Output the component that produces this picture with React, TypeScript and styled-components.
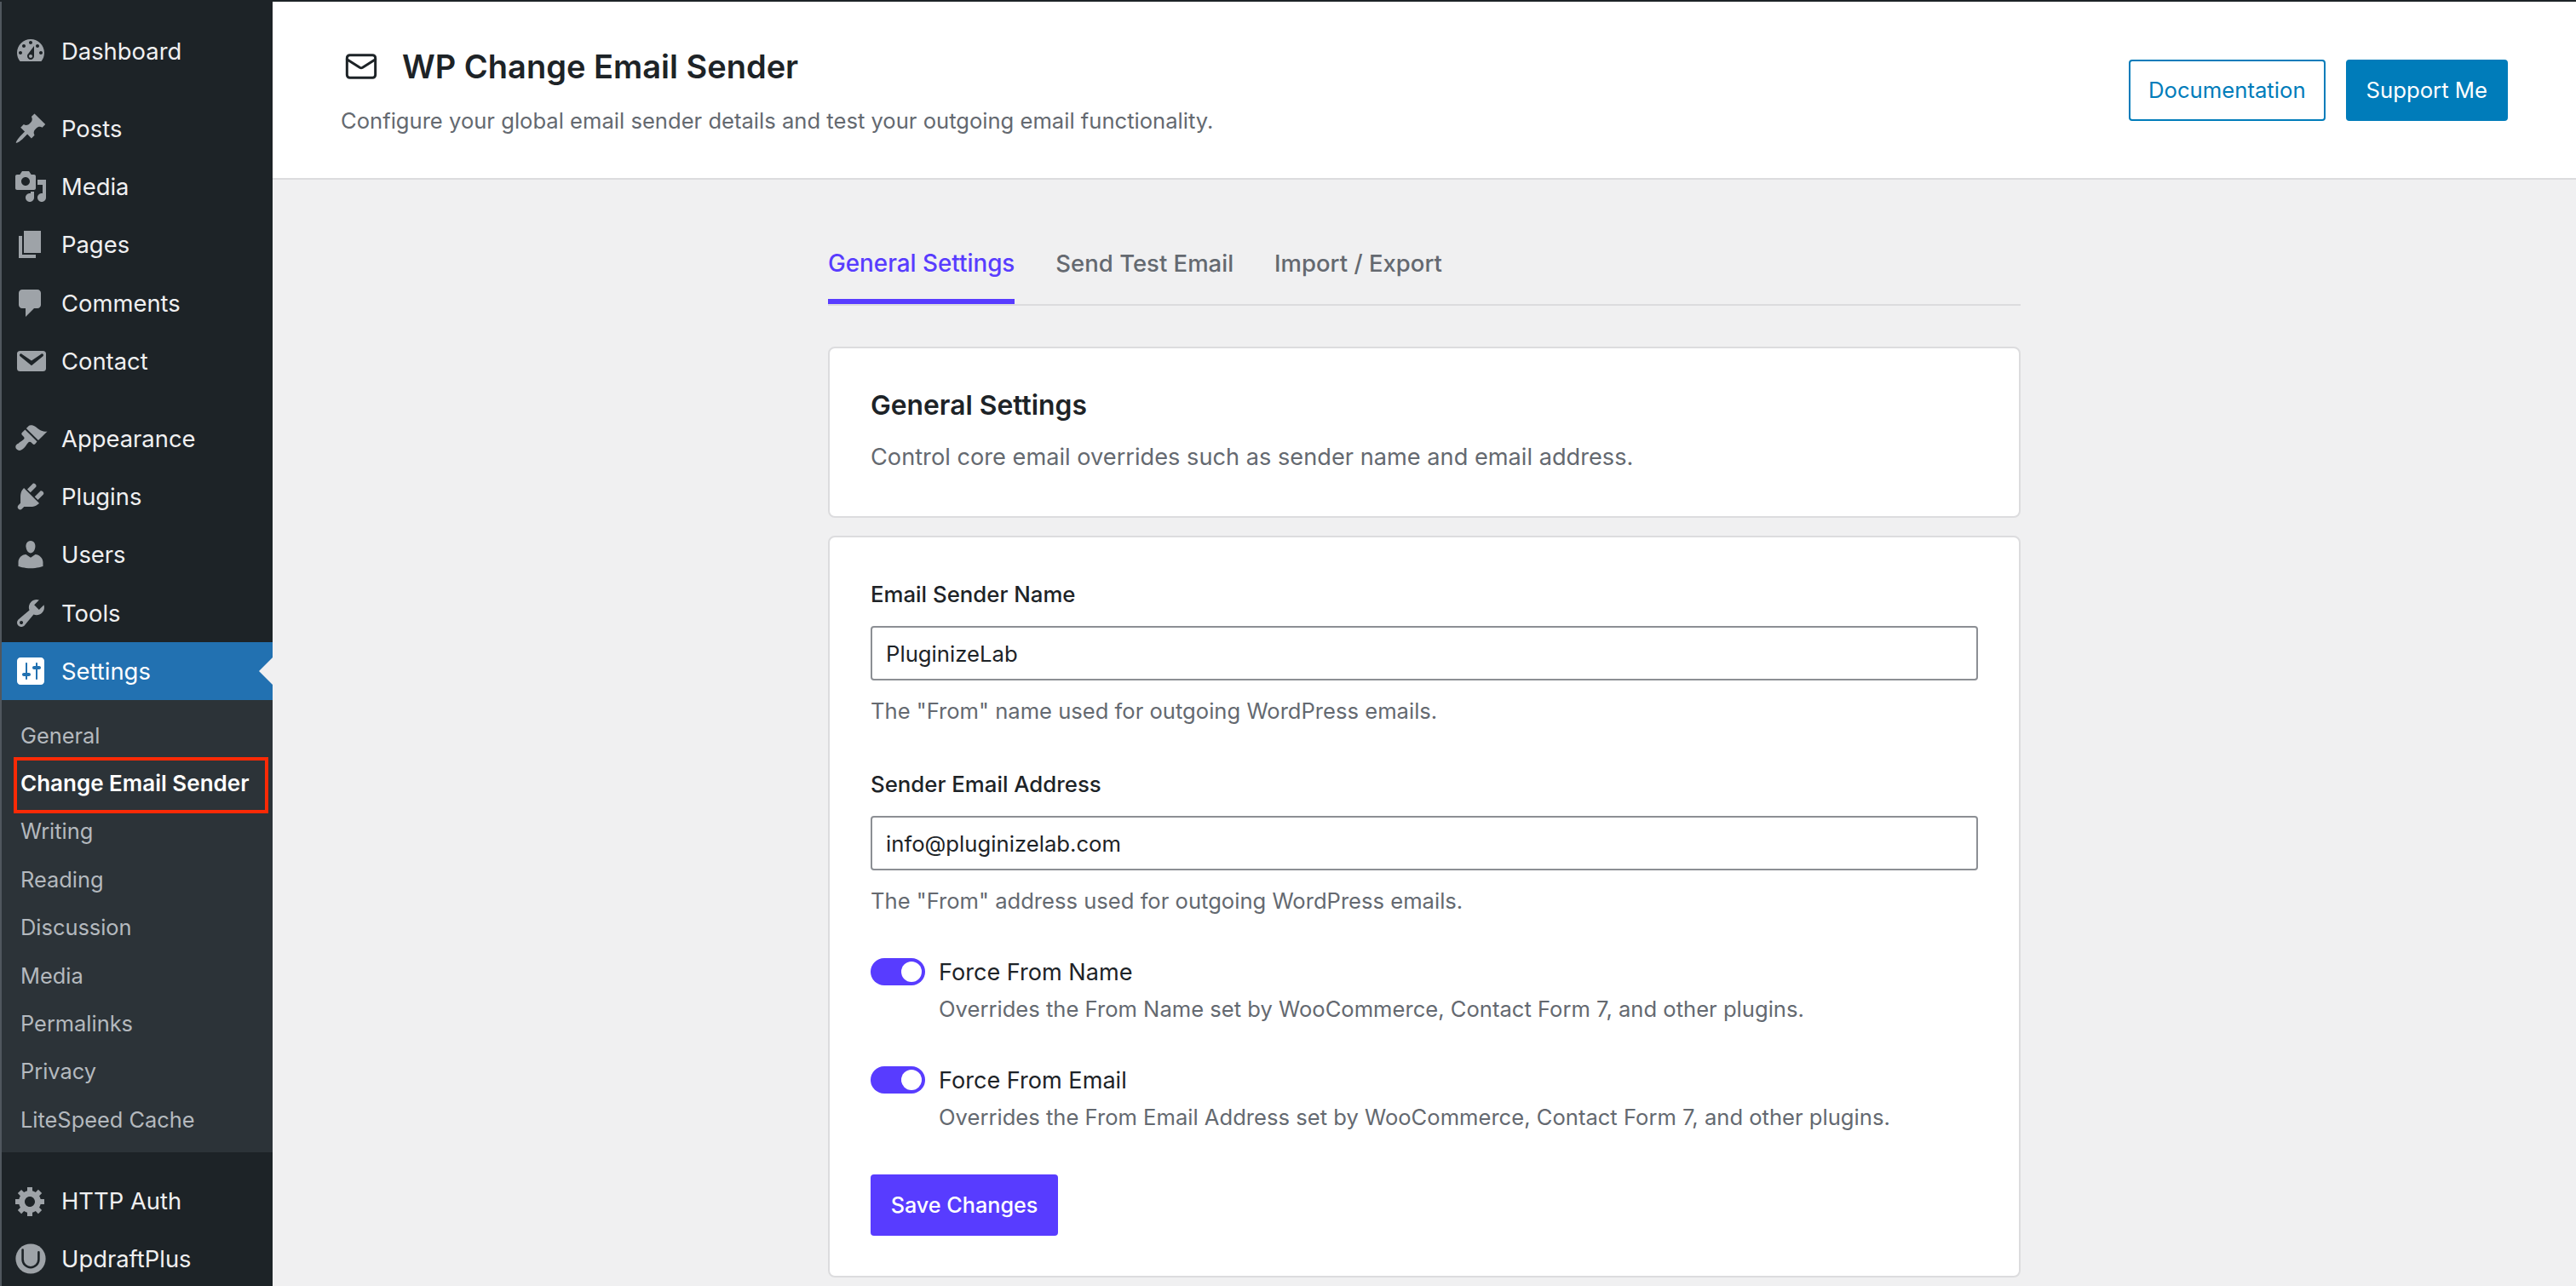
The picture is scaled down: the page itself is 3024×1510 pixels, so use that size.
import React from 'react';
import styled, { createGlobalStyle } from 'styled-components';
import { Mail } from 'lucide-react';

const Global = createGlobalStyle`
  html, body { margin: 0; padding: 0; background: #f0f0f1; }
  * { box-sizing: border-box; }
  #root { width: 3024px; height: 1510px; overflow: hidden; font-family: Inter, "Liberation Sans", sans-serif; }
`;

const Shell = styled.div`
  display: flex;
  width: 3024px;
  height: 1510px;
  overflow: hidden;
  border-top: 2px solid #1d2327;
`;

const Sidebar = styled.nav`
  flex: 0 0 320px;
  height: 1510px;
  background: #1d2327;
  border-left: 2px solid #50575e;
  padding-top: 24px;
  overflow: hidden;
`;

const Group = styled.div`
  margin-bottom: 22px;
`;

const MenuRow = styled.a<{ $active?: boolean }>`
  position: relative;
  display: flex;
  align-items: center;
  height: ${p => (p.$active ? '68px' : '68.4px')};
  margin-left: -2px;
  padding-left: 16px;
  background: ${p => (p.$active ? '#2271b1' : 'transparent')};
  color: ${p => (p.$active ? '#fff' : '#f0f0f1')};
  font-size: 27.4px;
  ${p =>
    p.$active &&
    `&::after {
      content: '';
      position: absolute;
      right: 0;
      top: 18px;
      border: 16px solid transparent;
      border-right-color: #f0f0f1;
      border-left-width: 0;
    }`}
`;

const MenuIcon = styled.svg<{ $active?: boolean }>`
  flex: 0 0 40px;
  width: 40px;
  height: 40px;
  margin-right: 16px;
  fill: ${p => (p.$active ? '#fff' : '#9ea3a8')};
`;

const Submenu = styled.div`
  background: #2c3338;
  padding: 13px 0 11px;
  margin-bottom: 22px;
`;

const SubRow = styled.a<{ $current?: boolean }>`
  position: relative;
  display: flex;
  align-items: center;
  height: 56.4px;
  padding-left: 22px;
  font-size: ${p => (p.$current ? '26px' : '25.4px')};
  color: ${p => (p.$current ? '#fff' : '#b4b9be')};
  font-weight: ${p => (p.$current ? 600 : 400)};
`;

const Marker = styled.span`
  position: absolute;
  left: 14px;
  top: -2px;
  width: 299px;
  height: 66px;
  border: 4px solid #fb2a06;
  pointer-events: none;
`;

const Main = styled.main`
  flex: 1;
  min-width: 0;
  background: #f0f0f1;
`;

const Header = styled.header`
  display: flex;
  align-items: center;
  justify-content: space-between;
  height: 209px;
  padding: 0 80px;
  background: #fff;
  border-bottom: 2px solid #dcdcde;
`;

const HeaderIntro = styled.div`
  padding-top: 3px;
`;

const TitleRow = styled.div`
  display: flex;
  align-items: center;
  padding-left: 4px;
  gap: 28px;
  color: #1d2327;
`;

const Title = styled.h1`
  margin: 0;
  font-size: 38px;
  line-height: 48px;
  font-weight: 600;
  color: #1d2327;
`;

const Subtitle = styled.p`
  margin: 21px 0 0;
  font-size: 25.6px;
  line-height: 38px;
  color: #646970;
`;

const Actions = styled.div`
  display: flex;
  gap: 24px;
`;

const HeaderButton = styled.a<{ $primary?: boolean }>`
  display: flex;
  align-items: center;
  justify-content: center;
  height: 72px;
  padding: 0 ${p => (p.$primary ? '22px' : '21px')};
  border: 2px solid #007cba;
  border-radius: 4px;
  font-size: 25.7px;
  background: ${p => (p.$primary ? '#007cba' : '#fff')};
  color: ${p => (p.$primary ? '#fff' : '#007cba')};
`;

const Column = styled.div`
  width: 1400px;
  margin: 78px auto 0;
`;

const Tabs = styled.div`
  display: flex;
  gap: 48px;
  border-bottom: 2px solid #dcdcde;
`;

const Tab = styled.a<{ $active?: boolean }>`
  padding-bottom: 22px;
  border-bottom: 6px solid ${p => (p.$active ? '#583cff' : 'transparent')};
  font-size: ${p => (p.$active ? '27.8px' : '27.5px')};
  line-height: 40px;
  font-weight: 500;
  color: ${p => (p.$active ? '#583cff' : '#646970')};
`;

const Card = styled.section`
  background: #fff;
  border: 2px solid #dcdcde;
  border-radius: 8px;
`;

const IntroCard = styled(Card)`
  margin-top: 48px;
  padding: 48px 48px 49px;
`;

const FormCard = styled(Card)`
  margin-top: 21px;
  padding: 48px 48px 47px;
`;

const CardTitle = styled.h2`
  margin: 0;
  font-size: 31.8px;
  line-height: 38px;
  font-weight: 600;
  color: #1d2327;
`;

const CardText = styled.p`
  margin: 22px 0 0;
  font-size: 27.2px;
  line-height: 40px;
  color: #646970;
`;

const Field = styled.div`
  margin-bottom: 50px;
`;

const Label = styled.label`
  display: block;
  padding-top: 2px;
  font-size: 25.8px;
  line-height: 34px;
  font-weight: 500;
  color: #1d2327;
`;

const TextInput = styled.input`
  display: block;
  width: 100%;
  height: 64px;
  margin-top: 20px;
  padding: 0 16px;
  border: 2px solid #8c8f94;
  border-radius: 4px;
  background: #fff;
  font-family: inherit;
  font-size: 25.7px;
  color: #1d2327;
`;

const Help = styled.p`
  margin: 19px 0 0;
  font-size: 25.6px;
  line-height: 34px;
  color: #646970;
`;

const ToggleRow = styled.div`
  display: flex;
  gap: 16px;
  margin-bottom: 50px;
`;

const Track = styled.span`
  display: flex;
  justify-content: flex-end;
  align-items: center;
  flex: 0 0 64px;
  height: 32px;
  padding-right: 4px;
  border-radius: 16px;
  background: #583cff;
`;

const Knob = styled.span`
  width: 24px;
  height: 24px;
  border-radius: 50%;
  background: #fff;
`;

const ToggleName = styled.div`
  font-size: 27.1px;
  line-height: 34px;
  color: #1d2327;
`;

const ToggleHelp = styled.div`
  margin-top: 9px;
  font-size: 25.6px;
  line-height: 34px;
  color: #646970;
`;

const SaveButton = styled.button`
  display: block;
  height: 72px;
  width: 220px;
  border: 0;
  border-radius: 4px;
  background: #583cff;
  color: #fff;
  font-family: inherit;
  font-size: 25.2px;
  font-weight: 500;
`;

const P = {
  dash: 'M3.76 16h12.48c1.1-1.37 1.76-3.11 1.76-5 0-4.42-3.58-8-8-8s-8 3.58-8 8c0 1.89.66 3.63 1.76 5zM10 4c.55 0 1 .45 1 1s-.45 1-1 1-1-.45-1-1 .45-1 1-1zM6 6c.55 0 1 .45 1 1s-.45 1-1 1-1-.45-1-1 .45-1 1-1zm8 0c.55 0 1 .45 1 1s-.45 1-1 1-1-.45-1-1 .45-1 1-1zm-5.37 5.55L12 7v6c0 1.1-.9 2-2 2s-2-.9-2-2c0-.57.24-1.08.63-1.45zM4 10c.55 0 1 .45 1 1s-.45 1-1 1-1-.45-1-1 .45-1 1-1zm12 0c.55 0 1 .45 1 1s-.45 1-1 1-1-.45-1-1 .45-1 1-1zm-5 3c0-.55-.45-1-1-1s-1 .45-1 1 .45 1 1 1 1-.45 1-1z',
  post: 'M10.44 3.02l1.82-1.82 6.36 6.35-1.83 1.82c-1.05-.68-2.48-.57-3.41.36l-.75.75c-.92.93-1.04 2.35-.35 3.41l-1.83 1.82-2.41-2.41-2.8 2.79c-.42.42-3.38 2.71-3.8 2.29s1.86-3.39 2.28-3.81l2.79-2.79L4.1 9.36l1.83-1.82c1.05.69 2.48.57 3.4-.36l.75-.75c.93-.92 1.05-2.35.36-3.41z',
  media: 'M13 11V4c0-.55-.45-1-1-1h-1.67L9 1H5L3.67 3H2c-.55 0-1 .45-1 1v7c0 .55.45 1 1 1h10c.55 0 1-.45 1-1zM7 4.5c1.38 0 2.5 1.12 2.5 2.5S8.38 9.5 7 9.5 4.5 8.38 4.5 7 5.62 4.5 7 4.5zM14 6h5v10.5c0 1.38-1.12 2.5-2.5 2.5S14 17.88 14 16.5s1.12-2.5 2.5-2.5c.17 0 .34.02.5.05V9h-3V6zm-4 8.05V13h2v3.5c0 1.38-1.12 2.5-2.5 2.5S7 17.88 7 16.5 8.12 14 9.5 14c.17 0 .34.02.5.05z',
  page: 'M6 15V2h10v13H6zm-1 1h8v2H3V5h2v11z',
  comments: 'M5 2h9c1.1 0 2 .9 2 2v7c0 1.1-.9 2-2 2h-2l-5 5v-5H5c-1.1 0-2-.9-2-2V4c0-1.1.9-2 2-2z',
  email: 'M3.87 4h13.25C18.37 4 19 4.59 19 5.79v8.42c0 1.19-.63 1.79-1.88 1.79H3.87c-1.25 0-1.88-.6-1.88-1.79V5.79c0-1.2.63-1.79 1.88-1.79zm6.62 8.6l6.74-5.53c.24-.2.43-.66.13-1.07-.29-.41-.82-.42-1.17-.17l-5.7 3.86L4.8 5.83c-.35-.25-.88-.24-1.17.17-.3.41-.11.87.13 1.07z',
  appearance: 'M14.48 11.06L7.41 3.99l1.5-1.5c.5-.56 2.3-.47 3.51.32 1.21.8 1.43 1.28 2.91 2.1 1.18.64 2.45 1.26 4.45.85zm-.71.71L6.7 4.7 4.93 6.47c-.39.39-.39 1.02 0 1.41l1.06 1.06c.39.39.39 1.03 0 1.42-.6.6-1.43 1.11-2.21 1.69-.35.26-.7.53-1.01.84C1.43 13.23.4 14.91 1.8 16.31c1.4 1.4 3.08.37 4.42-.97.31-.31.58-.66.84-1.01.58-.78 1.09-1.61 1.69-2.21.39-.39 1.03-.39 1.42 0l1.06 1.06c.39.39 1.02.39 1.41 0z',
  plugins: 'M13.11 4.36L9.87 7.6 8 5.73l3.24-3.24c.35-.34 1.05-.2 1.56.32.52.51.66 1.21.31 1.55zm-8 1.77l.91-1.12 9.01 9.01-1.19.84c-.71.71-2.63 1.16-3.82 1.16H6.14L4.9 17.26c-.59.59-1.54.59-2.12 0-.59-.58-.59-1.53 0-2.12l1.24-1.24v-3.88c0-1.13.4-3.19 1.09-3.89zm7.26 3.97l3.24-3.24c.34-.35 1.04-.21 1.55.31.52.51.66 1.21.31 1.55l-3.24 3.25z',
  users: 'M10 9.25c-2.27 0-2.73-3.44-2.73-3.44C7 4.02 7.82 2 9.97 2c2.16 0 2.98 2.02 2.71 3.81 0 0-.41 3.44-2.68 3.44zm0 2.57L12.72 10c2.39 0 4.52 2.33 4.52 4.53v2.49s-3.65 1.13-7.24 1.13c-3.65 0-7.24-1.13-7.24-1.13v-2.49c0-2.25 1.94-4.48 4.47-4.48z',
  tools: 'M16.68 9.77c-1.34 1.34-3.3 1.67-4.95.99l-5.41 6.52c-.99.99-2.59.99-3.58 0s-.99-2.59 0-3.57l6.52-5.42c-.68-1.65-.35-3.61.99-4.95 1.28-1.28 3.12-1.62 4.72-1.06l-2.89 2.89 2.82 2.82 2.86-2.87c.53 1.58.18 3.39-1.08 4.65zM3.81 16.21c.4.39 1.04.39 1.43 0 .4-.4.4-1.04 0-1.43-.39-.4-1.03-.4-1.43 0-.39.39-.39 1.03 0 1.43z',
  settings: 'M18 16V4c0-1.1-.9-2-2-2H4c-1.1 0-2 .9-2 2v12c0 1.1.9 2 2 2h12c1.1 0 2-.9 2-2zM8 11h1c.55 0 1 .45 1 1s-.45 1-1 1H8v1.5c0 .28-.22.5-.5.5s-.5-.22-.5-.5V13H6c-.55 0-1-.45-1-1s.45-1 1-1h1V5.5c0-.28.22-.5.5-.5s.5.22.5.5V11zm5-2h-1c-.55 0-1-.45-1-1s.45-1 1-1h1V5.5c0-.28.22-.5.5-.5s.5.22.5.5V7h1c.55 0 1 .45 1 1s-.45 1-1 1h-1v5.5c0 .28-.22.5-.5.5s-.5-.22-.5-.5V9z',
  gear: 'M18 12h-2.18c-.17.7-.44 1.35-.81 1.93l1.54 1.54-2.1 2.1-1.54-1.54c-.58.36-1.23.63-1.91.79V19H8v-2.18c-.68-.16-1.33-.43-1.91-.79l-1.54 1.54-2.12-2.12 1.54-1.54c-.36-.58-.63-1.23-.79-1.91H1V9.03h2.17c.16-.7.44-1.35.8-1.94L2.43 5.55l2.1-2.1 1.54 1.54c.58-.37 1.24-.64 1.93-.81V2h3v2.18c.68.16 1.33.43 1.91.79l1.54-1.54 2.12 2.12-1.54 1.54c.36.59.64 1.24.8 1.94H18V12zm-8.5 1.5c1.66 0 3-1.34 3-3s-1.34-3-3-3-3 1.34-3 3 1.34 3 3 3z',
};

const Icon = ({ d, active }: { d: string; active?: boolean }) => (
  <MenuIcon viewBox="0 0 20 20" $active={active}>
    <path d={d} />
  </MenuIcon>
);

const UpdraftIcon = () => (
  <MenuIcon viewBox="0 0 20 20">
    <circle cx="10" cy="10" r="8.8" />
    <path d="M5.3 4.8v5.6a4.7 4.7 0 0 0 9.4 0V6.2" fill="none" stroke="#1d2327" strokeWidth="1.3" strokeLinecap="round" />
  </MenuIcon>
);

const Row = ({ d, children, active }: { d: string; children: React.ReactNode; active?: boolean }) => (
  <MenuRow $active={active}>
    <Icon d={d} active={active} />
    {children}
  </MenuRow>
);

const subItems = ['General', 'Change Email Sender', 'Writing', 'Reading', 'Discussion', 'Media', 'Permalinks', 'Privacy', 'LiteSpeed Cache'];

const Toggle = ({ name, help }: { name: string; help: string }) => (
  <ToggleRow>
    <Track>
      <Knob />
    </Track>
    <div>
      <ToggleName>{name}</ToggleName>
      <ToggleHelp>{help}</ToggleHelp>
    </div>
  </ToggleRow>
);

export default function App() {
  return (
    <Shell>
      <Global />
      <Sidebar>
        <Group>
          <Row d={P.dash}>Dashboard</Row>
        </Group>
        <Group>
          <Row d={P.post}>Posts</Row>
          <Row d={P.media}>Media</Row>
          <Row d={P.page}>Pages</Row>
          <Row d={P.comments}>Comments</Row>
          <Row d={P.email}>Contact</Row>
        </Group>
        <Row d={P.appearance}>Appearance</Row>
        <Row d={P.plugins}>Plugins</Row>
        <Row d={P.users}>Users</Row>
        <Row d={P.tools}>Tools</Row>
        <Row d={P.settings} active>
          Settings
        </Row>
        <Submenu>
          {subItems.map(s => (
            <SubRow key={s} $current={s === 'Change Email Sender'}>
              {s}
              {s === 'Change Email Sender' && <Marker />}
            </SubRow>
          ))}
        </Submenu>
        <Row d={P.gear}>HTTP Auth</Row>
        <MenuRow>
          <UpdraftIcon />
          UpdraftPlus
        </MenuRow>
      </Sidebar>
      <Main>
        <Header>
          <HeaderIntro>
            <TitleRow>
              <Mail size={40} strokeWidth={1.8} />
              <Title>WP Change Email Sender</Title>
            </TitleRow>
            <Subtitle>Configure your global email sender details and test your outgoing email functionality.</Subtitle>
          </HeaderIntro>
          <Actions>
            <HeaderButton>Documentation</HeaderButton>
            <HeaderButton $primary>Support Me</HeaderButton>
          </Actions>
        </Header>
        <Column>
          <Tabs>
            <Tab $active>General Settings</Tab>
            <Tab>Send Test Email</Tab>
            <Tab>Import / Export</Tab>
          </Tabs>
          <IntroCard>
            <CardTitle>General Settings</CardTitle>
            <CardText>Control core email overrides such as sender name and email address.</CardText>
          </IntroCard>
          <FormCard>
            <Field>
              <Label>Email Sender Name</Label>
              <TextInput defaultValue="PluginizeLab" />
              <Help>The "From" name used for outgoing WordPress emails.</Help>
            </Field>
            <Field>
              <Label>Sender Email Address</Label>
              <TextInput defaultValue="info@pluginizelab.com" />
              <Help>The "From" address used for outgoing WordPress emails.</Help>
            </Field>
            <Toggle name="Force From Name" help="Overrides the From Name set by WooCommerce, Contact Form 7, and other plugins." />
            <Toggle name="Force From Email" help="Overrides the From Email Address set by WooCommerce, Contact Form 7, and other plugins." />
            <SaveButton>Save Changes</SaveButton>
          </FormCard>
        </Column>
      </Main>
    </Shell>
  );
}
